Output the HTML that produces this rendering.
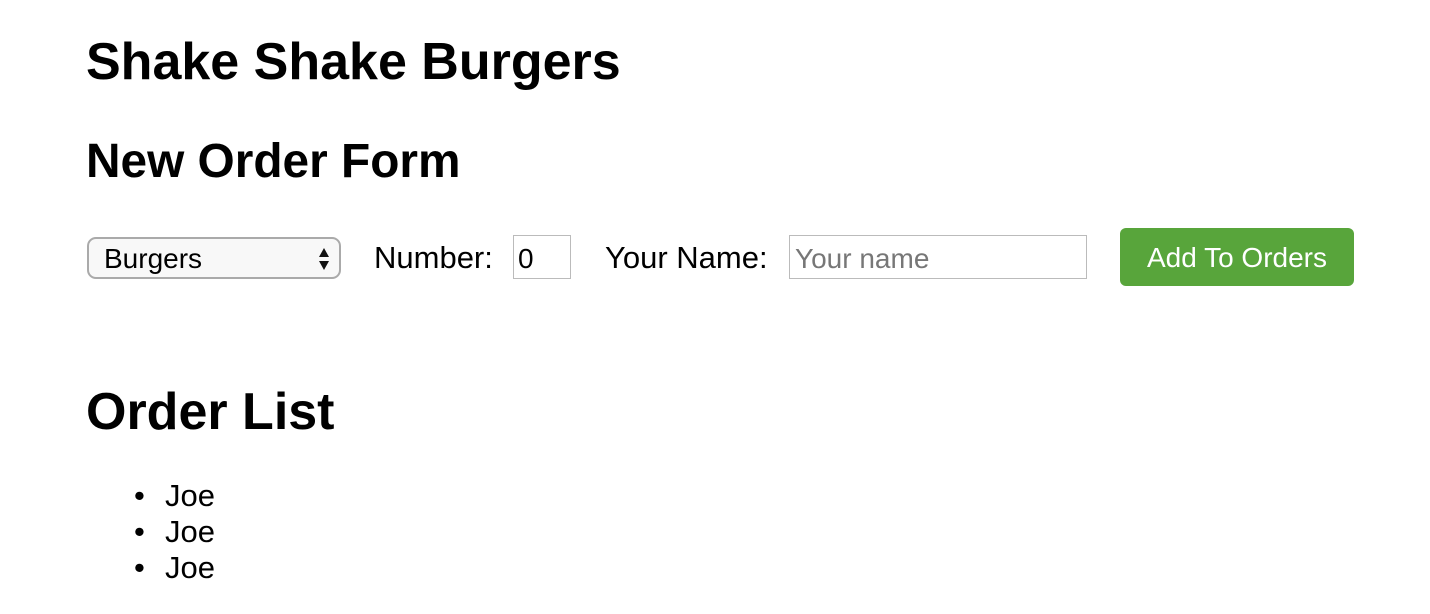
<!DOCTYPE html>
<html><head><meta charset="utf-8"><style>
body{margin:0;width:1430px;height:614px;background:#fff;font-family:"Liberation Sans",Arial,sans-serif;color:#000;position:relative;overflow:hidden}
.a{position:absolute;line-height:1;white-space:nowrap}
.h{font-weight:bold;font-size:52px}
.t{font-size:31px}
.box{position:absolute;box-sizing:border-box}
</style></head><body>
<div class="a h" style="left:86px;top:36px">Shake Shake Burgers</div>
<div class="a h" style="left:86px;top:138px;font-size:47.8px">New Order Form</div>
<div class="box" style="left:87px;top:237px;width:254px;height:42px;border:2px solid #aaa;border-radius:9px;background:#f8f8f8"></div>
<div class="a t" style="left:104px;top:245px;font-size:28px">Burgers</div>
<svg class="box" style="left:318px;top:247px" width="12" height="24" viewBox="0 0 12 24"><path d="M6 1 L11 10 L1 10 Z M6 23 L11 14 L1 14 Z" fill="#111"/></svg>
<div class="a t" style="left:374px;top:242px">Number:</div>
<div class="box" style="left:513px;top:235px;width:58px;height:44px;border:1px solid #bbb"></div>
<div class="a t" style="left:518px;top:245px;font-size:28px">0</div>
<div class="a t" style="left:605px;top:242px">Your Name:</div>
<div class="box" style="left:789px;top:235px;width:298px;height:44px;border:1px solid #bbb"></div>
<div class="a t" style="left:795px;top:245px;font-size:28px;color:#777">Your name</div>
<div class="box" style="left:1120px;top:228px;width:234px;height:58px;background:#58a53b;border-radius:6px"></div>
<div class="a" style="left:1120px;top:244px;width:234px;text-align:center;font-size:28px;color:#fff">Add To Orders</div>
<div class="a h" style="left:86px;top:386px">Order List</div>
<div class="a t" style="left:134px;top:480px">•</div><div class="a t" style="left:165px;top:480px">Joe</div>
<div class="a t" style="left:134px;top:516px">•</div><div class="a t" style="left:165px;top:516px">Joe</div>
<div class="a t" style="left:134px;top:552px">•</div><div class="a t" style="left:165px;top:552px">Joe</div>
</body></html>
